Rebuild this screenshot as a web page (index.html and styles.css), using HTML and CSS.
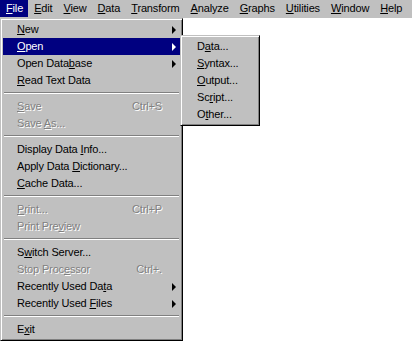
FILE: index.html
```html
<!DOCTYPE html>
<html lang="en">
<head>
  <meta charset="UTF-8" />
  <title>File Menu</title>
  <link rel="stylesheet" href="styles.css">
</head>
<body>

  <div class="menubar">
    <span class="bar-item active"><u>F</u>ile</span>
    <span class="bar-item"><u>E</u>dit</span>
    <span class="bar-item"><u>V</u>iew</span>
    <span class="bar-item"><u>D</u>ata</span>
    <span class="bar-item"><u>T</u>ransform</span>
    <span class="bar-item"><u>A</u>nalyze</span>
    <span class="bar-item"><u>G</u>raphs</span>
    <span class="bar-item"><u>U</u>tilities</span>
    <span class="bar-item"><u>W</u>indow</span>
    <span class="bar-item"><u>H</u>elp</span>
  </div>

  <!-- File dropdown -->
  <div class="menu file-menu">
    <div class="item sub"><span class="label"><u>N</u>ew</span></div>
    <div class="item sub selected"><span class="label"><u>O</u>pen</span></div>
    <div class="item sub"><span class="label">Open Data<u>b</u>ase</span></div>
    <div class="item"><span class="label"><u>R</u>ead Text Data</span></div>
    <div class="sep"></div>
    <div class="item disabled"><span class="label"><u>S</u>ave</span><span class="key">Ctrl+S</span></div>
    <div class="item disabled"><span class="label">Save <u>A</u>s...</span></div>
    <div class="sep"></div>
    <div class="item"><span class="label">Display Data <u>I</u>nfo...</span></div>
    <div class="item"><span class="label">Apply Data <u>D</u>ictionary...</span></div>
    <div class="item"><span class="label"><u>C</u>ache Data...</span></div>
    <div class="sep"></div>
    <div class="item disabled"><span class="label"><u>P</u>rint...</span><span class="key">Ctrl+P</span></div>
    <div class="item disabled"><span class="label">Print Pre<u>v</u>iew</span></div>
    <div class="sep"></div>
    <div class="item"><span class="label">S<u>w</u>itch Server...</span></div>
    <div class="item disabled"><span class="label">Stop Proc<u>e</u>ssor</span><span class="key">Ctrl+.</span></div>
    <div class="item sub"><span class="label">Recently Used Da<u>t</u>a</span></div>
    <div class="item sub"><span class="label">Recently Used <u>F</u>iles</span></div>
    <div class="sep"></div>
    <div class="item"><span class="label">E<u>x</u>it</span></div>
  </div>

  <!-- Open submenu -->
  <div class="menu open-menu">
    <div class="item"><span class="label">D<u>a</u>ta...</span></div>
    <div class="item"><span class="label"><u>S</u>yntax...</span></div>
    <div class="item"><span class="label"><u>O</u>utput...</span></div>
    <div class="item"><span class="label">Sc<u>r</u>ipt...</span></div>
    <div class="item"><span class="label">O<u>t</u>her...</span></div>
  </div>

</body>
</html>
```

FILE: styles.css
```css
body {
  margin: 0;
  background: #fff;
  font-family: 'Liberation Sans', Arial, sans-serif;
  font-size: 11px;
  letter-spacing: -0.15px;
  color: #000;
  width: 412px;
  height: 341px;
  overflow: hidden;
  position: relative;
}

u {
  text-decoration: underline;
  text-underline-offset: 1px;
}

.menubar {
  display: flex;
  height: 18px;
  background: #c0c0c0;
}

.bar-item {
  line-height: 17px;
  height: 17px;
  padding: 0 5px 0 6px;
}

.bar-item.active {
  background: #000080;
  color: #fff;
}

.menu {
  position: absolute;
  background: #c0c0c0;
  border-top: 1px solid #c0c0c0;
  border-left: 1px solid #c0c0c0;
  border-right: 1px solid #000;
  border-bottom: 1px solid #000;
  box-shadow: inset 1px 1px 0 #fff, inset -1px -1px 0 #808080;
  padding: 2px;
  box-sizing: border-box;
}

.file-menu {
  left: 0;
  top: 18px;
  width: 183px;
  height: 323px;
}

.open-menu {
  left: 180px;
  top: 35px;
  width: 80px;
}

.item {
  display: flex;
  align-items: center;
  box-sizing: border-box;
  height: 17px;
  padding: 0 8px 2px 14px;
  position: relative;
  white-space: nowrap;
}

.item .label {
  flex: 1;
}

.item .key {
  margin-right: 10px;
}

.item.selected {
  background: #000080;
  color: #fff;
}

.item.disabled {
  color: #808080;
  text-shadow: 1px 1px 0 #fff;
}

.item.sub::after {
  content: "";
  position: absolute;
  right: 4px;
  top: 5px;
  border-top: 4px solid transparent;
  border-bottom: 4px solid transparent;
  border-left: 4px solid #000;
}

.item.sub.selected::after {
  border-left-color: #fff;
}

.sep {
  height: 0;
  margin: 3px 1px 4px;
  border-top: 1px solid #808080;
  border-bottom: 1px solid #fff;
}
```
